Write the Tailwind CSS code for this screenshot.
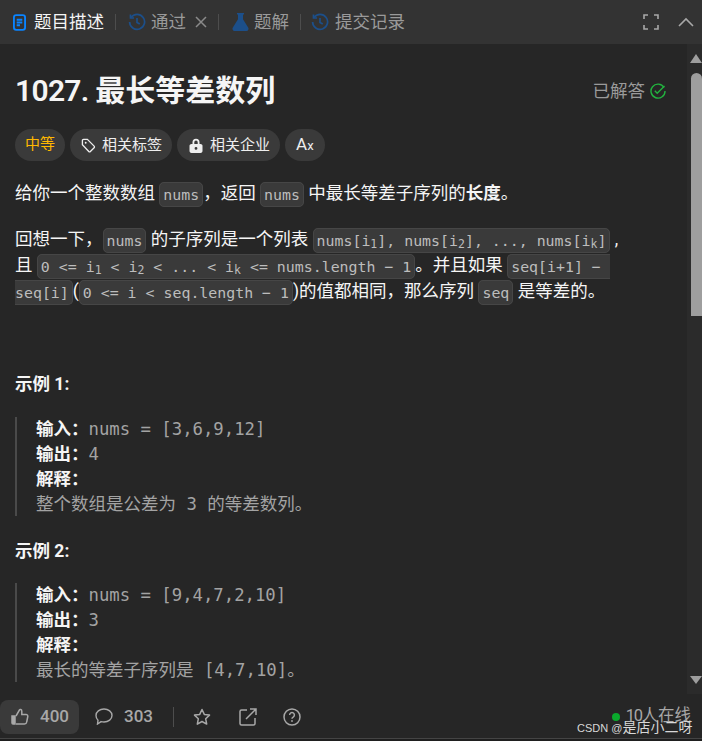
<!DOCTYPE html>
<html lang="zh-CN">
<head>
    <meta charset="UTF-8">
    <title>1027. 最长等差数列</title>
    <script src="https://cdn.jsdelivr.net/npm/@tailwindcss/browser@4"></script>
</head>
<body class="bg-[#262626] font-['Roboto','Noto_Sans_CJK_SC',sans-serif] text-[17.5px] text-[#f5f5f5]">
<div class="relative h-[741px] w-[702px] overflow-hidden">

    <!-- Tabs -->
    <header class="flex h-[44px] items-center bg-[#333333] pl-[13px] text-[#9a9a9a]">
        <svg class="h-[17px] w-[13px] text-[#0a84ff]" viewBox="0 0 14 18" fill="none" stroke="currentColor" stroke-width="2"><rect x="1" y="1" width="12" height="16" rx="2.5"/><path d="M4 6h6M4 9h6M4 12h3.5"/></svg>
        <span class="ml-[8px] text-[#f5f5f5]">题目描述</span>
        <span class="ml-[11px] h-[16px] w-px bg-[#4d4d4d]"></span>
        <svg class="ml-[12px] h-[18px] w-[18px] text-[#1c4f8a]" viewBox="0 0 18 18" fill="none" stroke="currentColor" stroke-width="1.7"><path d="M3 4.5A7.5 7.5 0 1 1 1.6 9"/><path d="M2.5 1.5v3.5H6"/><path d="M9 5v4.4l2.8 1.7"/></svg>
        <span class="ml-[5px]">通过</span>
        <svg class="ml-[9px] h-[12px] w-[12px] text-[#8a8a8a]" viewBox="0 0 12 12" fill="none" stroke="currentColor" stroke-width="1.5"><path d="M1 1l10 10M11 1L1 11"/></svg>
        <span class="ml-[11px] h-[16px] w-px bg-[#4d4d4d]"></span>
        <svg class="ml-[13px] h-[18px] w-[17px] text-[#1c4f8a]" viewBox="0 0 17 18" fill="currentColor"><path d="M5 0h7v1.6h-1v4.6l5.3 8.6c.7 1.3-.1 3.2-1.8 3.2H2.500c-1.700 0-2.500-1.900-1.800-3.200L6 6.200V1.600H5z"/></svg>
        <span class="ml-[5px]">题解</span>
        <span class="ml-[11px] h-[16px] w-px bg-[#4d4d4d]"></span>
        <svg class="ml-[10px] h-[18px] w-[18px] text-[#1c4f8a]" viewBox="0 0 18 18" fill="none" stroke="currentColor" stroke-width="1.7"><path d="M3 4.5A7.5 7.5 0 1 1 1.6 9"/><path d="M2.500 1.500v3.500H6"/><path d="M9 5v4.400l2.800 1.700"/></svg>
        <span class="ml-[6px]">提交记录</span>
        <svg class="ml-auto h-[16px] w-[16px] text-[#a8a8a8]" viewBox="0 0 16 16" fill="none" stroke="currentColor" stroke-width="1.6"><path d="M1 5V1h4M11 1h4v4M15 11v4h-4M5 15H1v-4"/></svg>
        <svg class="ml-[19px] mr-[8px] h-[10px] w-[16px] text-[#a8a8a8]" viewBox="0 0 16 10" fill="none" stroke="currentColor" stroke-width="1.6"><path d="M1 9l7-7 7 7"/></svg>
    </header>

    <div class="flex h-[650px]">
        <main class="min-w-0 flex-1 overflow-hidden pl-[15px]">
            <div class="mt-[31px] flex h-[32px] items-center justify-between pr-[21px]">
                <h1 class="text-[30px] font-bold leading-[32px]"><span class="font-semibold tracking-[-0.7px]">1027. </span>最长等差数列</h1>
                <div class="flex items-center text-[#9a9a9a]">
                    <span>已解答</span>
                    <svg class="ml-[5px] h-[16px] w-[16px] text-[#22b33f]" viewBox="0 0 16 16" fill="none" stroke="currentColor" stroke-width="1.400"><path d="M14 4.500A7 7 0 1 0 15 8"/><path d="M4.800 7.800l2.400 2.400L14.500 3"/></svg>
                </div>
            </div>

            <div class="mt-[22px] flex gap-[5px] text-[15px] leading-[30px]">
                <span class="rounded-full bg-[#3a3a3a] px-[10px] text-[#ffb700]">中等</span>
                <span class="flex items-center rounded-full bg-[#3a3a3a] pl-[11px] pr-[10px] text-[#eeeeee]">
                    <svg class="mr-[6px] h-[15px] w-[15px]" viewBox="0 0 16 16" fill="none" stroke="currentColor" stroke-width="1.400"><path d="M1.500 2.700c0-.7.500-1.200 1.200-1.200h4.100l7.200 7.200c.5.500.5 1.200 0 1.700l-4 4c-.5.500-1.200.5-1.700 0L1.500 7.200z"/><circle cx="5" cy="5" r="1" fill="currentColor" stroke="none"/></svg>
                    相关标签
                </span>
                <span class="flex items-center rounded-full bg-[#3a3a3a] pl-[12px] pr-[10px] text-[#eeeeee]">
                    <svg class="mr-[7px] h-[15px] w-[14px]" viewBox="0 0 13 15" fill="currentColor"><path fill-rule="evenodd" d="M3 6V4.200a3.500 3.500 0 0 1 7 0V6h1c1 0 2 .8 2 1.800v5.200c0 1-1 2-2 2H2c-1 0-2-1-2-2V7.800C0 6.800 1 6 2 6zm1.800 0h3.400V4.200a1.700 1.700 0 0 0-3.400 0zM6.500 9a1.400 1.400 0 1 0 0 2.800 1.400 1.400 0 0 0 0-2.800z"/></svg>
                    相关企业
                </span>
                <span class="rounded-full bg-[#3a3a3a] px-[11px] text-[17px] text-[#eeeeee]">A<span class="text-[13px]">x</span></span>
            </div>

            <p class="mt-[19px] whitespace-nowrap leading-[26px]">给你一个整数数组 <code class="rounded-[5px] border border-[#464646] bg-[#3a3a3a] px-[3px] py-[2.500px] font-['DejaVu_Sans_Mono',monospace] text-[14.900px] leading-none text-[#bdbdbd]">nums</code>，返回 <code class="rounded-[5px] border border-[#464646] bg-[#3a3a3a] px-[3px] py-[2.500px] font-['DejaVu_Sans_Mono',monospace] text-[14.900px] leading-none text-[#bdbdbd]">nums</code> 中最长等差子序列的<strong class="font-bold">长度</strong>。</p>

            <p class="mt-[20px] whitespace-nowrap leading-[26px]">回想一下，<code class="rounded-[5px] border border-[#464646] bg-[#3a3a3a] px-[3px] py-[2.500px] font-['DejaVu_Sans_Mono',monospace] text-[14.900px] leading-none text-[#bdbdbd]">nums</code> 的子序列是一个列表 <code class="rounded-[5px] border border-[#464646] bg-[#3a3a3a] px-[3px] py-[2.500px] font-['DejaVu_Sans_Mono',monospace] text-[14.900px] leading-none text-[#bdbdbd]">nums[i<sub class="text-[11.500px]">1</sub>], nums[i<sub class="text-[11.500px]">2</sub>], ..., nums[i<sub class="text-[11.500px]">k</sub>]</code> ,<br>且 <code class="rounded-[5px] border border-[#464646] bg-[#3a3a3a] px-[3px] py-[2.500px] font-['DejaVu_Sans_Mono',monospace] text-[14.900px] leading-none text-[#bdbdbd]">0 &lt;= i<sub class="text-[11.500px]">1</sub> &lt; i<sub class="text-[11.500px]">2</sub> &lt; ... &lt; i<sub class="text-[11.500px]">k</sub> &lt;= nums.length − 1</code>。并且如果 <code class="rounded-[5px] border border-[#464646] bg-[#3a3a3a] px-[3px] py-[2.500px] font-['DejaVu_Sans_Mono',monospace] text-[14.900px] leading-none text-[#bdbdbd]">seq[i+1] −&nbsp;<br>seq[i]</code>(<code class="rounded-[5px] border border-[#464646] bg-[#3a3a3a] px-[3px] py-[2.500px] font-['DejaVu_Sans_Mono',monospace] text-[14.900px] leading-none text-[#bdbdbd]">0 &lt;= i &lt; seq.length − 1</code>)的值都相同，那么序列 <code class="rounded-[5px] border border-[#464646] bg-[#3a3a3a] px-[3px] py-[2.500px] font-['DejaVu_Sans_Mono',monospace] text-[14.900px] leading-none text-[#bdbdbd]">seq</code> 是等差的。</p>

            <p class="mt-[67px] font-bold leading-[26px]">示例 1:</p>
            <div class="mt-[20px] h-[99px] border-l-2 border-[#4a4a4a] pl-[19px] leading-[25px] text-[#a3a3a3]">
                <strong class="font-bold text-[#f5f5f5]">输入：</strong><span class="font-['DejaVu_Sans_Mono',monospace] text-[17.300px]">nums = [3,6,9,12]</span><br>
                <strong class="font-bold text-[#f5f5f5]">输出：</strong><span class="font-['DejaVu_Sans_Mono',monospace] text-[17.300px]">4</span><br>
                <strong class="font-bold text-[#f5f5f5]">解释：</strong><br>
                整个数组是公差为<span class="whitespace-pre font-['DejaVu_Sans_Mono',monospace] text-[17.300px]"> 3 </span>的等差数列。
            </div>

            <p class="mt-[22px] font-bold leading-[26px]">示例 2:</p>
            <div class="mt-[19px] h-[99px] border-l-2 border-[#4a4a4a] pl-[19px] leading-[25px] text-[#a3a3a3]">
                <strong class="font-bold text-[#f5f5f5]">输入：</strong><span class="font-['DejaVu_Sans_Mono',monospace] text-[17.300px]">nums = [9,4,7,2,10]</span><br>
                <strong class="font-bold text-[#f5f5f5]">输出：</strong><span class="font-['DejaVu_Sans_Mono',monospace] text-[17.300px]">3</span><br>
                <strong class="font-bold text-[#f5f5f5]">解释：</strong><br>
                最长的等差子序列是<span class="whitespace-pre font-['DejaVu_Sans_Mono',monospace] text-[17.300px]"> [4,7,10]</span>。
            </div>
        </main>

        <!-- Scrollbar -->
        <div class="flex w-[15px] flex-col items-end bg-[#2b2b2b] pt-[10px]">
            <span class="h-0 w-0 border-x-[6px] border-b-[9px] border-x-transparent border-b-[#9e9e9e]"></span>
            <span class="mt-[10px] h-[243px] w-[11px] rounded-t-full bg-[#9e9e9e]"></span>
            <span class="mb-[10px] mt-auto h-0 w-0 border-x-[6px] border-t-[8px] border-x-transparent border-t-[#9e9e9e]"></span>
        </div>
    </div>

    <!-- Footer -->
    <footer class="flex h-[44px] items-center bg-[#262626] pt-px text-[17px] font-medium text-[#a8a8a8]">
        <div class="flex h-[34px] w-[79px] items-center rounded-[8px] bg-[#3a3a3a] pl-[11px]">
            <svg class="h-[17px] w-[18px]" viewBox="0 0 18 17" fill="none" stroke="currentColor" stroke-width="1.500"><path d="M1 8h3v8H2a1 1 0 0 1-1-1z" fill="currentColor"/><path d="M5 8l3.500-6c.3-.8 2.300-.8 2.300 1.200V6.500h4.200c1.300 0 2 1 1.800 2l-1.100 5.500c-.2 1.200-1 2-2.200 2H5"/></svg>
            <span class="ml-[11px]">400</span>
        </div>
        <svg class="ml-[16px] h-[17px] w-[18px]" viewBox="0 0 18 17" fill="none" stroke="currentColor" stroke-width="1.400"><path d="M9 1c4.400 0 8 2.900 8 6.500S13.400 14 9 14c-1 0-2-.2-2.900-.4L2.500 16l.5-3.700C1.700 11.100 1 9.400 1 7.500 1 3.900 4.600 1 9 1z"/></svg>
        <span class="ml-[11px]">303</span>
        <span class="ml-[20px] h-[20px] w-px bg-[#4d4d4d]"></span>
        <svg class="ml-[19px] h-[18px] w-[18px]" viewBox="0 0 18 18" fill="none" stroke="currentColor" stroke-width="1.500" stroke-linejoin="round"><path d="M9 1.500l2.300 4.900 5.200.7-3.800 3.700 1 5.300L9 13.500l-4.700 2.600 1-5.300L1.500 7.100l5.200-.7z"/></svg>
        <svg class="ml-[28px] h-[18px] w-[18px]" viewBox="0 0 18 18" fill="none" stroke="currentColor" stroke-width="1.500"><path d="M8 2H2.500A1.500 1.500 0 0 0 1 3.500v12A1.500 1.500 0 0 0 2.500 17h12a1.500 1.500 0 0 0 1.500-1.500V10"/><path d="M7 11l9.500-9.500M11 1h6v6"/></svg>
        <svg class="ml-[26px] h-[18px] w-[18px]" viewBox="0 0 18 18" fill="none" stroke="currentColor" stroke-width="1.500"><circle cx="9" cy="9" r="8"/><path d="M6.600 7a2.400 2.400 0 1 1 3.600 2.100c-.8.500-1.200.9-1.200 1.700"/><circle cx="9" cy="13" r=".9" fill="currentColor" stroke="none"/></svg>
        <span class="ml-auto mr-[11px] flex items-center text-[16.500px] font-normal">
            <span class="h-[8px] w-[8px] rounded-full bg-[#0aa82c]"></span>
            <span class="ml-[6px] [word-spacing:-4px]"><span class="tracking-[-1.500px]">10</span> 人在线</span>
        </span>
    </footer>

    <div class="h-[3px] border-t border-[#444444] bg-[#1f1f1f]"></div>

    <!-- Watermark -->
    <span class="absolute left-[577px] top-[718px] font-['Liberation_Sans','Noto_Sans_CJK_SC',sans-serif] text-[11px] leading-[18px] text-[#d8d8d8]">CSDN @<span class="text-[14px]">是店小二呀</span></span>
</div>
</body>
</html>
